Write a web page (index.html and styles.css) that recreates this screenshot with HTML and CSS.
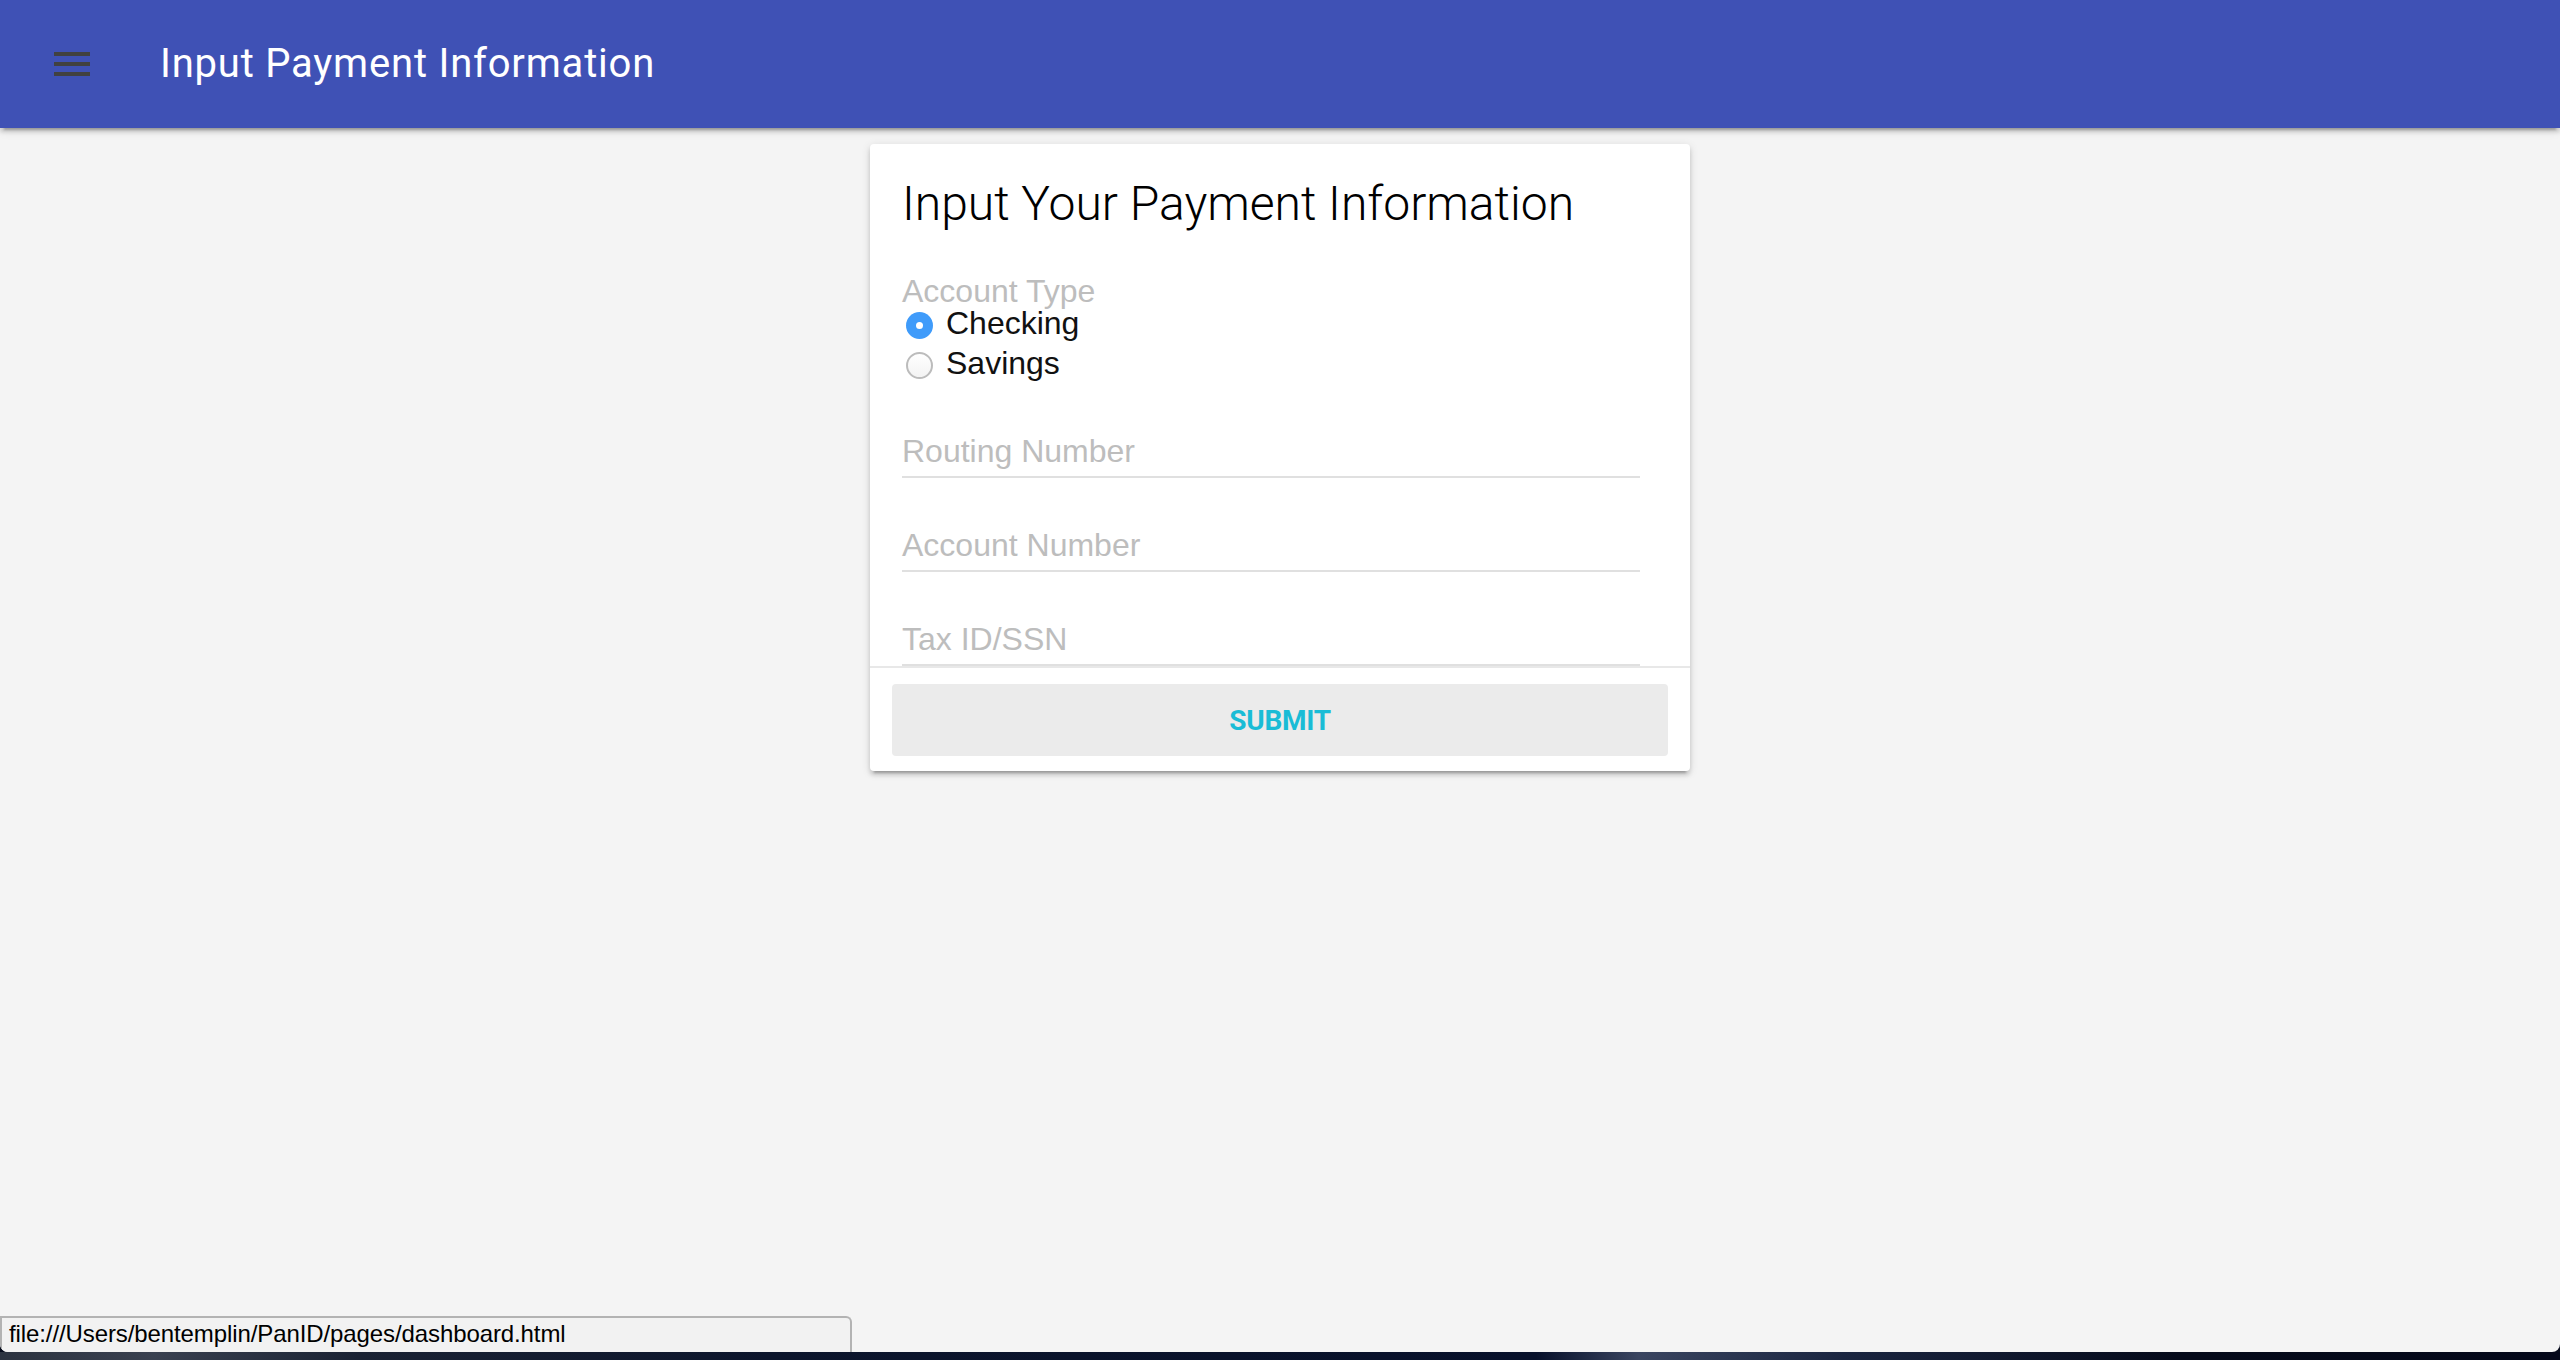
FILE: index.html
```html
<!DOCTYPE html>
<html lang="en">
<head>
<meta charset="utf-8">
<title>Input Payment Information</title>
<link rel="stylesheet" href="styles.css">
</head>
<body>
<div class="window">
  <header class="app-bar">
    <button class="drawer-btn" aria-label="Menu">
      <svg width="48" height="48" viewBox="0 0 48 48"><rect x="6" y="12" width="36" height="4" fill="#414141"/><rect x="6" y="22" width="36" height="4" fill="#414141"/><rect x="6" y="32" width="36" height="4" fill="#414141"/></svg>
    </button>
    <span class="app-title">Input Payment Information</span>
  </header>
  <main class="content">
    <section class="card">
      <div class="card-title">
        <h2 class="card-title-text">Input Your Payment Information</h2>
      </div>
      <div class="card-body">
        <div class="group-label">Account Type</div>
        <div class="radio-row first"><span class="radio checked"></span><span class="radio-text">Checking</span></div>
        <div class="radio-row"><span class="radio"></span><span class="radio-text">Savings</span></div>
        <div class="field first-field"><span class="placeholder">Routing Number</span></div>
        <div class="field"><span class="placeholder">Account Number</span></div>
        <div class="field"><span class="placeholder">Tax ID/SSN</span></div>
      </div>
      <div class="card-actions">
        <button class="submit">Submit</button>
      </div>
    </section>
  </main>
  <div class="status-bar">file:///Users/bentemplin/PanID/pages/dashboard.html</div>
</div>
<div class="desktop-strip"></div>
</body>
</html>
```
FILE: styles.css
```css
html, body {
  margin: 0;
  padding: 0;
}
body {
  background: #070c1c;
  width: 2560px;
  height: 1360px;
  overflow: hidden;
}
.window {
  position: relative;
  height: 1352px;
  background: #f4f4f4;
  border-radius: 0 0 8px 8px;
  overflow: hidden;
}
.app-bar {
  position: relative;
  z-index: 2;
  height: 128px;
  background: #3f51b5;
  display: flex;
  align-items: center;
  box-shadow: 0 4px 4px 0 rgba(0,0,0,.14), 0 6px 2px -4px rgba(0,0,0,.2), 0 2px 10px 0 rgba(0,0,0,.12);
}
.drawer-btn {
  width: 48px;
  height: 48px;
  margin-left: 48px;
  padding: 0;
  border: 0;
  background: transparent;
  display: block;
}
.drawer-btn svg { display: block; }
.app-title {
  margin-left: 64px;
  font-family: Roboto, "Liberation Sans", sans-serif;
  font-size: 40px;
  line-height: 48px;
  font-weight: 400;
  letter-spacing: 0.8px;
  color: #fff;
}
.content {
  padding-top: 16px;
}
.card {
  width: 820px;
  margin: 0 auto;
  background: #fff;
  border-radius: 4px;
  box-shadow: 0 4px 4px 0 rgba(0,0,0,.14), 0 6px 2px -4px rgba(0,0,0,.2), 0 2px 10px 0 rgba(0,0,0,.12);
}
.card-title {
  padding: 32px;
}
.card-title-text {
  margin: 0;
  font-family: Roboto, "Liberation Sans", sans-serif;
  font-size: 48px;
  line-height: 56px;
  font-weight: 300;
  color: #000;
}
.card-body {
  padding: 0 32px;
  font-family: "Liberation Sans", Arial, sans-serif;
}
.group-label {
  margin-top: 13px;
  font-size: 32px;
  line-height: 28px;
  color: #bdbdbd;
}
.radio-row {
  display: flex;
  align-items: flex-start;
  margin-top: 6px;
  height: 34px;
}
.radio-row.first { margin-top: 1px; }
.radio {
  box-sizing: border-box;
  width: 27px;
  height: 27px;
  margin: 6px 13px 0 4px;
  border-radius: 50%;
  border: 2px solid #bcbcbc;
  background: linear-gradient(#ffffff, #f3f3f3);
  position: relative;
  flex: none;
}
.radio.checked {
  border: 0;
  background: #3f9bfa;
}
.radio.checked::after {
  content: "";
  position: absolute;
  left: 10px;
  top: 10px;
  width: 7px;
  height: 7px;
  border-radius: 50%;
  background: #fff;
}
.radio-text {
  font-size: 32px;
  line-height: 34px;
  color: #111;
}
.field {
  width: 738px;
  padding: 48px 0 8px;
  border-bottom: 2px solid #e0e0e0;
}
.field.first-field { margin-top: 4px; }
.placeholder {
  display: block;
  font-size: 32px;
  line-height: 36px;
  color: #bdbdbd;
  position: relative;
  top: 1px;
}
.card-actions {
  border-top: 2px solid #e8e8e8;
  padding: 16px 22px 15px;
}
.submit {
  display: block;
  width: 100%;
  height: 72px;
  border: 0;
  border-radius: 4px;
  background: #ebebeb;
  color: #19bcd6;
  font-family: Roboto, "Liberation Sans", sans-serif;
  font-size: 28px;
  font-weight: 700;
  text-transform: uppercase;
  letter-spacing: -0.3px;
  padding: 0;
}
.status-bar {
  position: absolute;
  left: 0;
  bottom: 0;
  box-sizing: border-box;
  width: 852px;
  height: 36px;
  padding-left: 7px;
  background: #f2f2f2;
  border: 2px solid #b3b3b3;
  border-bottom: 0;
  border-top-right-radius: 6px;
  font-family: "Liberation Sans", Arial, sans-serif;
  font-size: 24px;
  line-height: 32px;
  letter-spacing: -0.1px;
  color: #000;
  white-space: nowrap;
}
.desktop-strip {
  height: 8px;
  background: linear-gradient(90deg, #2c3340 0%, #3a4150 6%, #1a2233 14%, #0c152c 30%, #07102a 60%, #3a4560 64%, #1a2540 72%, #050a1a 85%, #04081a 100%);
}
```
